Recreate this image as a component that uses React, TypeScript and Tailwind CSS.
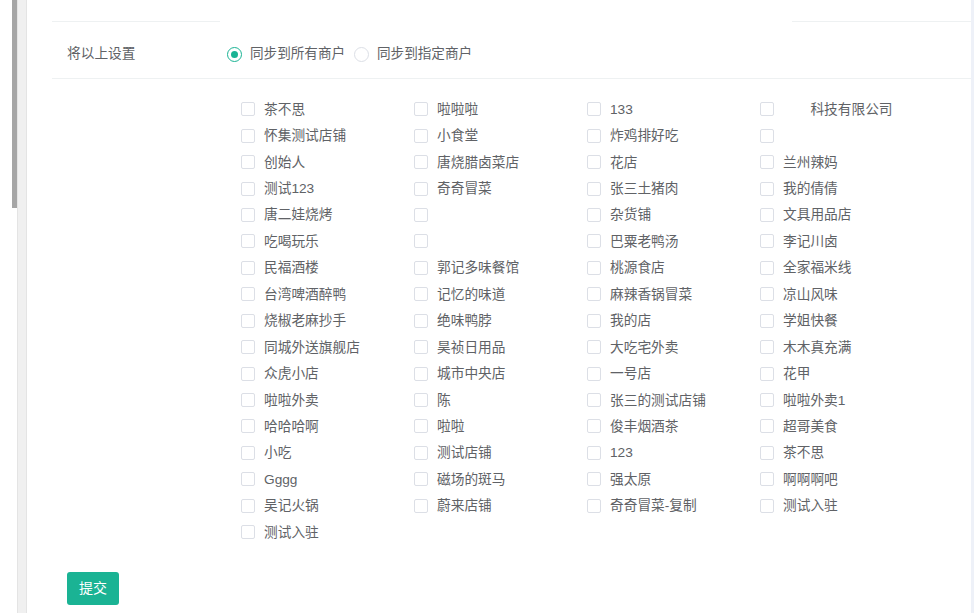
import React from "react";

const ROWS: string[][] = [
  ["茶不思", "啦啦啦", "133", "\u3000\u3000科技有限公司"],
  ["怀集测试店铺", "小食堂", "炸鸡排好吃", ""],
  ["创始人", "唐烧腊卤菜店", "花店", "兰州辣妈"],
  ["测试123", "奇奇冒菜", "张三土猪肉", "我的倩倩"],
  ["唐二娃烧烤", "", "杂货铺", "文具用品店"],
  ["吃喝玩乐", "", "巴粟老鸭汤", "李记川卤"],
  ["民福酒楼", "郭记多味餐馆", "桃源食店", "全家福米线"],
  ["台湾啤酒醉鸭", "记忆的味道", "麻辣香锅冒菜", "凉山风味"],
  ["烧椒老麻抄手", "绝味鸭脖", "我的店", "学姐快餐"],
  ["同城外送旗舰店", "昊祯日用品", "大吃宅外卖", "木木真充满"],
  ["众虎小店", "城市中央店", "一号店", "花甲"],
  ["啦啦外卖", "陈", "张三的测试店铺", "啦啦外卖1"],
  ["哈哈哈啊", "啦啦", "俊丰烟酒茶", "超哥美食"],
  ["小吃", "测试店铺", "123", "茶不思"],
  ["Gggg", "磁场的斑马", "强太原", "啊啊啊吧"],
  ["吴记火锅", "蔚来店铺", "奇奇冒菜-复制", "测试入驻"],
  ["测试入驻"],
];

const FONT = { fontFamily: '"Liberation Sans", "Noto Sans CJK SC", sans-serif' };

function Radio({ checked, label }: { checked: boolean; label: string }) {
  return (
    <label className="flex items-center">
      <span
        className={`flex h-[15px] w-[15px] items-center justify-center rounded-full border bg-white ${
          checked ? "border-[#1ab394]" : "border-[#dcdfe6]"
        }`}
      >
        {checked && <span className="h-[7px] w-[7px] rounded-full bg-[#1ab394]" />}
      </span>
      <span className="ml-[8px] text-[13.6px] leading-[20px] text-[#606266]">{label}</span>
    </label>
  );
}

function Check({ label }: { label: string }) {
  return (
    <label className="flex h-[26.44px] items-center">
      <span className="h-[14px] w-[14px] shrink-0 rounded-[2px] border border-[#dcdfe6] bg-white" />
      <span className="ml-[9px] whitespace-pre pt-px text-[13.7px] leading-[20px] text-[#606266]">{label}</span>
    </label>
  );
}

export default function App() {
  return (
    <div className="flex h-[613px] w-[974px] overflow-hidden bg-white" style={FONT}>
      {/* scroll rail on the left */}
      <div className="w-[12px] bg-white" />
      <div className="w-[5px] bg-white">
        <div className="h-[208px] bg-[#a6a6a6]" />
      </div>
      <div className="w-[10px] border-x border-[#e4e4e4] bg-[#f0f0f0]" />

      <main className="flex-1 pl-[25px]">
        <div className="flex h-[22px] items-end justify-between">
          <div className="h-px w-[168px] bg-[#eef1f2]" />
          <div className="h-px w-[179px] bg-[#eef1f2]" />
        </div>

        {/* sync target */}
        <div className="flex h-[57px] border-b border-[#eef1f2] pt-[22px]">
          <div className="w-[175px] pl-[15px] text-[13.7px] leading-[20px] text-[#606266]">将以上设置</div>
          <div className="flex items-start">
            <div className="w-[127px]">
              <Radio checked label="同步到所有商户" />
            </div>
            <Radio checked={false} label="同步到指定商户" />
          </div>
        </div>

        {/* merchants */}
        <div className="ml-[189px] grid w-[692px] grid-cols-4 pt-[17px]">
          {ROWS.flat().map((name, i) => (
            <Check key={i} label={name} />
          ))}
        </div>

        <div className="pl-[15px] pt-[27px]">
          <button className="h-[33px] w-[52px] rounded-[3px] bg-[#1ab394] text-[14px] text-white">提交</button>
        </div>
      </main>

      <div className="w-[3px] bg-[#eef1f8]" />
    </div>
  );
}
